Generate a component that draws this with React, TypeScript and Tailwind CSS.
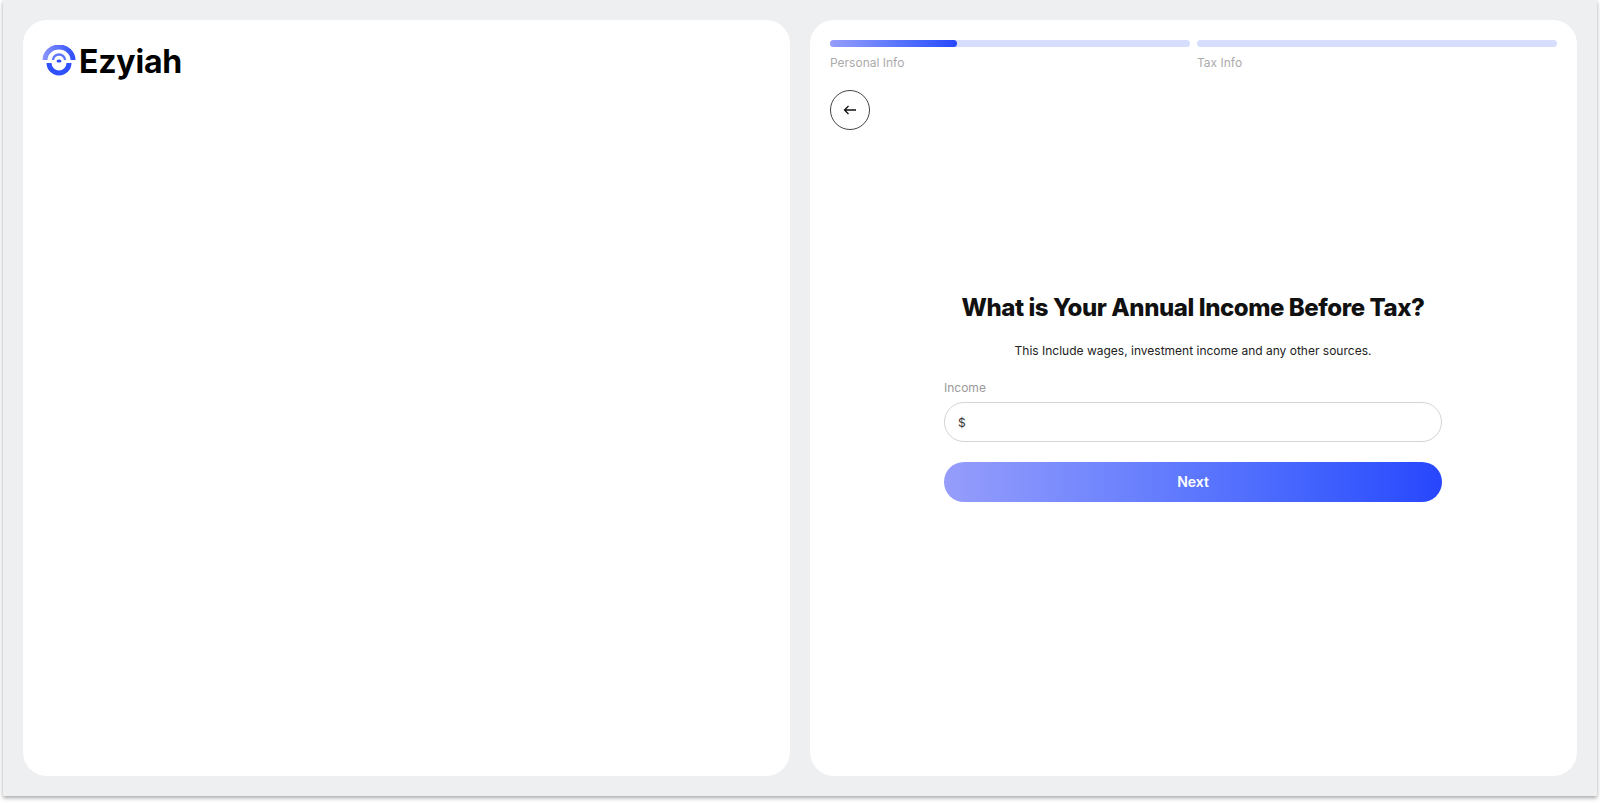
function Logo() {
  return (
    <div className="flex items-start gap-[3px]">
      <svg width="34" height="31" viewBox="0 0 34 31" fill="none" className="-ml-[1px] shrink-0">
        <defs>
          <linearGradient id="logoArc" x1="0" y1="0" x2="34" y2="0" gradientUnits="userSpaceOnUse">
            <stop offset="0" stopColor="#8E97FC" />
            <stop offset="1" stopColor="#2A4BFD" />
          </linearGradient>
        </defs>
        <path d="M3 15 A 14 13 0 0 1 31 15" stroke="url(#logoArc)" strokeWidth="5" />
        <path d="M11 15 A 6 5.5 0 0 1 23 15" stroke="#5F78FD" strokeWidth="2.5" />
        <path d="M7 18 A 10 10 0 0 0 27 18" stroke="#2F50FD" strokeWidth="5" />
        <ellipse cx="17" cy="16" rx="2.5" ry="1.5" fill="#2A4BFD" />
      </svg>
      <span className="mt-[1px] text-[32px] leading-none font-bold tracking-[-0.2px] text-black">Ezyiah</span>
    </div>
  );
}

function ProgressStep({ label, fill }: { label: string; fill?: string }) {
  return (
    <div className="flex-1">
      <div className="h-[7px] rounded-full bg-[#D7DDFD]">
        {fill && <div className={`h-full rounded-full bg-linear-to-r from-[#969DFB] to-[#2746FD] ${fill}`} />}
      </div>
      <p className="mt-[8px] text-xs leading-[15px] text-[#ABABAB]">{label}</p>
    </div>
  );
}

export default function App() {
  return (
    <div className="h-[803px] w-[1600px] overflow-hidden bg-white font-['Inter',sans-serif]">
      <div className="ml-[3px] flex h-[796px] w-[1594px] gap-[20px] bg-[#EEEFF1] px-[20px] pt-[20px] shadow-[0_2px_4px_rgba(0,0,0,0.35)]">
        <div className="h-[756px] w-[767px] rounded-[24px] bg-white px-[20px] pt-[25px]">
          <Logo />
        </div>
        <div className="h-[756px] w-[767px] rounded-[24px] bg-white p-[20px]">
          <div className="flex gap-[7px]">
            <ProgressStep label="Personal Info" fill="w-[127px]" />
            <ProgressStep label="Tax Info" />
          </div>
          <button className="mt-[20px] flex size-[40px] items-center justify-center rounded-full border border-[#444444] text-[#111111]">
            <svg width="14" height="10" viewBox="0 0 14 10" fill="none" stroke="currentColor" strokeWidth="1.3">
              <path d="M13 5H1.5M5.5 1L1.5 5L5.5 9" />
            </svg>
          </button>
          <div className="mt-[160px] ml-[114px] w-[498px]">
            <h1 className="text-center text-2xl leading-[36px] font-extrabold tracking-[-0.43px] text-[#111111]">
              What is Your Annual Income Before Tax?
            </h1>
            <p className="mt-[16px] text-center text-xs leading-[18px] text-[#222222]">
              This Include wages, investment income and any other sources.
            </p>
            <label className="mt-[20px] block text-xs leading-[15px] text-[#9A9A9A]">Income</label>
            <div className="mt-[7px] flex h-[40px] items-center rounded-full border border-[#D4D4D4] px-[13px] pt-[1px] text-xs text-[#333333]">
              $
            </div>
            <button className="mt-[20px] h-[40px] w-full rounded-full bg-linear-to-r from-[#969DFB] to-[#2746FD] text-sm font-semibold text-white">
              Next
            </button>
          </div>
        </div>
      </div>
    </div>
  );
}
